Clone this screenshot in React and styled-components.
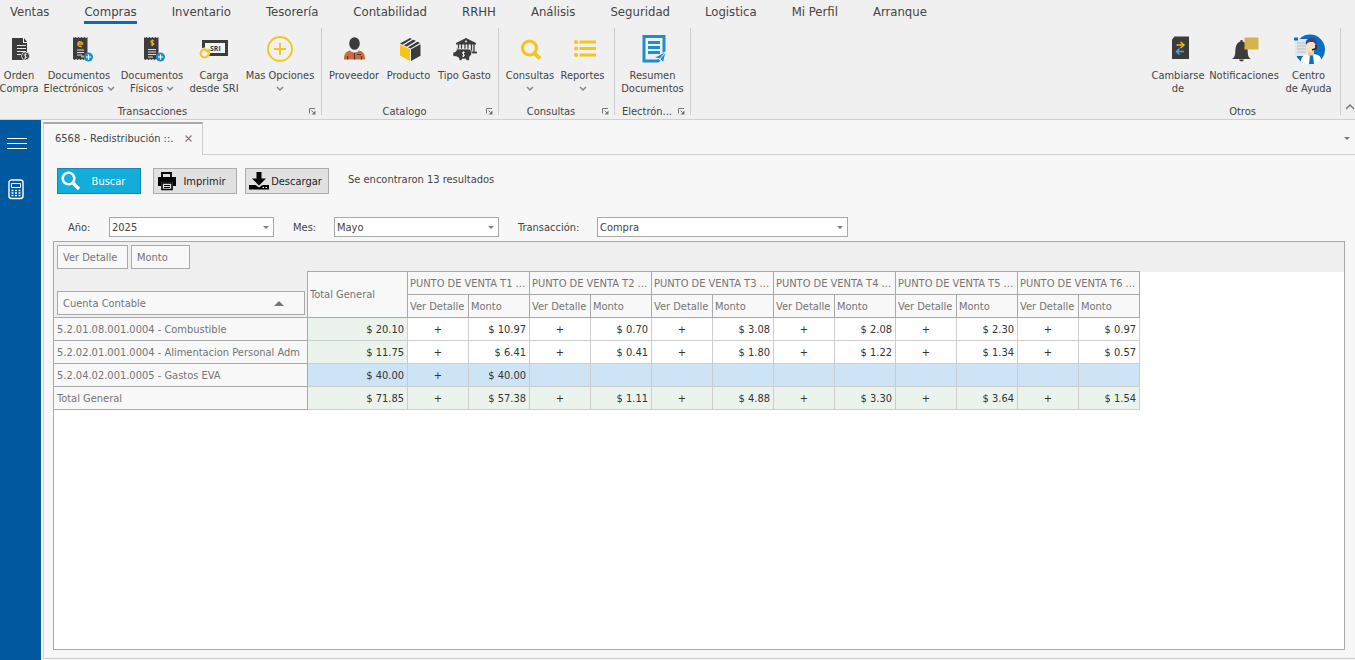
import React from "react";
import styled, { createGlobalStyle } from "styled-components";

const Global = createGlobalStyle`
  *, *::before, *::after { box-sizing: border-box; }
  body { margin: 0; background: #f7f7f7; }
  body, button, select { font-family: "DejaVu Sans Condensed", "Noto Sans", sans-serif; font-size: 11px; line-height: 13px; color: #444; }
  button { border: 0; background: none; padding: 0; cursor: pointer; }
`;

const Page = styled.div`
  min-height: 100vh;
  display: flex;
  flex-direction: column;
`;

const Ribbon = styled.header`
  height: 120px;
  background: #f0f0f0;
  border-bottom: 1px solid #d0d0d0;
`;

const Menu = styled.nav`
  height: 28px;
  padding-left: 10px;
  display: flex;
  gap: 35px;
`;

const MenuItem = styled.a`
  height: 24px;
  padding-top: 3px;
  font-size: 13px;
  line-height: 18px;
  color: #444;
  text-decoration: none;
  border-bottom: 3px solid ${(p) => (p.$active ? "#0a6abf" : "transparent")};
`;

const Groups = styled.div`
  display: flex;
  height: 91px;
`;

const Group = styled.section`
  padding: 0 ${(p) => p.$padRight}px 0 ${(p) => p.$pad}px;
  background: linear-gradient(#cdcdcd, #cdcdcd) right top / 1px 87px no-repeat;
  margin-left: ${(p) => (p.$end ? "auto" : "0")};
`;

const GroupButtons = styled.div`
  display: flex;
  height: 76px;
`;

const RibbonButton = styled.button`
  width: ${(p) => p.$w}px;
  display: flex;
  flex-direction: column;
  align-items: center;
  white-space: nowrap;
`;

const IconBox = styled.span`
  height: 41px;
  padding-top: 5px;
  svg { display: block; }
`;

const Label = styled.span`
  display: block;
  height: 13px;
`;

const GroupFooter = styled.div`
  height: 14px;
  display: flex;
  align-items: center;
  text-align: center;
  gap: 3px;
  span { flex: 1; }
`;

const Launcher = styled.button`
  width: 8px;
  height: 8px;
  svg { display: block; }
`;

const Collapse = styled.button`
  width: 14px;
  padding: 72px 0 0 4px;
  align-self: flex-start;
`;

const Body = styled.div`
  flex: 1;
  display: flex;
`;

const Sidebar = styled.aside`
  width: 41px;
  margin-right: 2px;
  padding: 17px 0 0 7px;
  background: #00589f;
  display: flex;
  flex-direction: column;
  gap: 28px;
  button { width: 20px; }
  svg { display: block; }
`;

const Main = styled.main`
  flex: 1;
  min-width: 0;
  padding: 2px 0 1px;
  display: flex;
  flex-direction: column;
`;

const TabStrip = styled.div`
  display: flex;
  height: 33px;
`;

const Tab = styled.div`
  width: 160px;
  padding: 0 10px 2px 11px;
  display: flex;
  align-items: center;
  justify-content: space-between;
  border: 1px solid #cdcdcd;
  border-top: 2px solid #a9a9a9;
  border-bottom: 0;
`;

const TabRest = styled.div`
  flex: 1;
  display: flex;
  align-items: center;
  justify-content: flex-end;
  padding: 0 5px 4px 0;
  border-bottom: 1px solid #d0d0d0;
`;

const Panel = styled.div`
  flex: 1;
  display: flex;
  flex-direction: column;
  padding: 13px 10px 8px 9px;
  border: solid #cdcdcd;
  border-width: 0 0 1px 1px;
`;

const Toolbar = styled.div`
  display: flex;
  align-items: center;
  padding-left: 4px;
`;

const ToolButton = styled.button`
  width: 84px;
  height: 26px;
  margin-right: ${(p) => p.$gap}px;
  padding: 0 4px 0 3px;
  display: flex;
  align-items: center;
  color: ${(p) => (p.$primary ? "#fff" : "#222")};
  background: ${(p) => (p.$primary ? "#12addb" : "#e1e1e1")};
  border: 1px solid ${(p) => (p.$primary ? "#1883b8" : "#adadad")};
  span { flex: 1; text-align: center; }
`;

const Result = styled.span`
  padding-bottom: 4px;
`;

const Filters = styled.div`
  margin-top: 23px;
  padding-left: 15px;
  display: grid;
  grid-template-columns: 41px 165px 19px 41px 165px 19px 79px 251px;
  align-items: center;
`;

const Gap = styled.span``;

const SelectBox = styled.div`
  position: relative;
  height: 20px;
  &::after {
    content: "";
    position: absolute;
    right: 5px;
    top: 9px;
    border: 3px solid transparent;
    border-top-color: #8c7a80;
    border-bottom: 0;
    pointer-events: none;
  }
`;

const Select = styled.select`
  appearance: none;
  display: block;
  width: 100%;
  height: 20px;
  padding: 0 16px 0 2px;
  border: 1px solid #a9a9a9;
  border-radius: 0;
  background: #fff;
`;

const Pivot = styled.section`
  flex: 1;
  margin-top: 4px;
  border: 1px solid #a9a9a9;
  background: #fff;
`;

const FieldArea = styled.div`
  height: 30px;
  padding: 3px;
  display: flex;
  gap: 3px;
  background: #efefef;
`;

const Field = styled.button`
  width: ${(p) => p.$w};
  height: 24px;
  padding: 0 20px 0 5px;
  display: flex;
  align-items: center;
  justify-content: space-between;
  white-space: nowrap;
  color: #757575;
  background: #f8f8f8;
  border: 1px solid #a9a9a9;
`;

const Table = styled.table`
  width: 1086px;
  margin-top: -1px;
  table-layout: fixed;
  border-collapse: separate;
  border-spacing: 0;
`;

const HeadCell = styled.th`
  height: ${(p) => (p.$top ? 24 : 23)}px;
  padding: 0 2px;
  text-align: left;
  font-weight: normal;
  color: #757575;
  white-space: pre;
  overflow: hidden;
  text-overflow: ellipsis;
  background: #f8f8f8;
  border: solid #a9a9a9;
  border-width: ${(p) => (p.$top ? 1 : 0)}px 1px 1px 0;
`;

const CornerCell = styled.th`
  padding: 19px 2px 2px 3px;
  vertical-align: bottom;
  font-weight: normal;
  background: #efefef;
  border: solid #a9a9a9;
  border-width: 0 1px 1px 0;
`;

const RowHead = styled(HeadCell)`
  padding: 0 3px;
`;

const Cell = styled.td`
  height: 23px;
  padding: 0 ${(p) => (p.$center ? 0 : 3)}px 0 0;
  text-align: ${(p) => (p.$center ? "center" : "right")};
  color: #333;
  background: ${(p) => (p.$selected ? "#cde4f7" : p.$total ? "#ebf4ec" : "#fff")};
  border: solid #cdcdcd;
  border-width: 0 1px 1px 0;
`;

const DARK = "#3c3c3c";
const YEL = "#f5c518";
const BLUE = "#1b8fd2";

const Svg = ({ children, w = 32, h = 32, ...rest }) => (
  <svg width={w} height={h} viewBox={`0 0 ${w} ${h}`} fill="none" aria-hidden="true" {...rest}>
    {children}
  </svg>
);

const Chevron = () => (
  <Svg w={8} h={6}>
    <path d="M1 1l3 3 3-3" stroke="#858585" strokeWidth="1.500" />
  </Svg>
);

const PlusBadge = ({ x, y }) => (
  <g>
    <circle cx={x} cy={y} r="4.500" fill={BLUE} />
    <path d={`M${x - 2.5} ${y}h5M${x} ${y - 2.5}v5`} stroke="#fff" strokeWidth="1.200" />
  </g>
);

const Receipt = ({ x }) => (
  <path
    fill={DARK}
    d={`M${x} 4l1 1 1.500-1 1.500 1 1.500-1 1.500 1 1.500-1 1.500 1 1.500-1 1.500 1 1.500-1V26l-1 1-1.500-1-1.500 1-1.500-1-1.500 1-1.500-1-1.500 1-1.500-1-1.500 1-1.500-1z`}
  />
);

const icons = {
  orden: (
    <Svg>
      <path d="M9 5h11v5h4v17H9z" fill={DARK} />
      <path d="M21 5l3 4h-3z" fill={DARK} />
      <path d="M14 12.500h9M14 15.500h9M14 18.500h9M14 21.500h4" stroke="#e8e8e8" strokeWidth="1.200" />
      <circle cx="22.500" cy="23" r="4" fill={DARK} stroke="#e8e8e8" strokeWidth=".8" />
      <path d="M24 21.500c-2-1-3.500 0-2.500 1.200s2.500.6 2 1.800-2 .8-2.500.3M22.500 20.500v5" stroke="#fff" strokeWidth=".7" />
    </Svg>
  ),
  electronico: (
    <Svg>
      <Receipt x={10} />
      <path d="M15 11h4.500a2.300 2.300 0 1 0-1 2" stroke="#f2a01e" strokeWidth="1.600" />
      <path d="M14 17h7M14 19.500h7M14 22h5" stroke="#ddd" strokeWidth="1.100" />
      <path d="M18 23.500h3" stroke="#f2a01e" strokeWidth="2" />
      <PlusBadge x={25.5} y={24} />
    </Svg>
  ),
  fisico: (
    <Svg>
      <Receipt x={8} />
      <path d="M18 8c-2-1.200-3.800 0-2.800 1.300s3.300.7 2.600 2-2.300.9-3 .3M16.400 6.500v6.500" stroke="#f2b01e" strokeWidth="1.100" />
      <path d="M12 16.500h8M12 19h8M12 21.500h8M12 24h5" stroke="#ddd" strokeWidth="1.100" />
      <PlusBadge x={24.5} y={24} />
    </Svg>
  ),
  sri: (
    <Svg>
      <path d="M4 7h26v16H4z" fill={DARK} />
      <path d="M7 10h20v10H7z" fill="#f4f4f4" />
      <circle cx="6.500" cy="20" r="5.500" fill="#f0f0f0" />
      <path d="M9 17.200a4 4 0 1 0 1.500 4" stroke={YEL} strokeWidth="2" />
      <path d="M6.500 17.500l5.500-2v6z" fill={YEL} />
      <text x="12" y="17.800" fontSize="7" fontWeight="bold" fill={DARK} fontFamily="Open Sans, sans-serif">SRI</text>
    </Svg>
  ),
  mas: (
    <Svg>
      <circle cx="16" cy="16" r="12" stroke={YEL} strokeWidth="1.800" />
      <path d="M10 16h12M16 10v12" stroke={YEL} strokeWidth="1.800" />
    </Svg>
  ),
  proveedor: (
    <Svg>
      <ellipse cx="16.500" cy="10.500" rx="5.300" ry="6.300" fill={DARK} />
      <path d="M6 26.500c0-5 1-7.500 6-9 2 2.500 7 2.500 9 0 5 1.500 6 4 6 9z" fill="#c96d3f" />
      <path d="M16.500 20v6.500M9.500 23v3.500M23.500 23v3.500M19 21.500h4" stroke={DARK} strokeWidth="1.100" />
    </Svg>
  ),
  producto: (
    <Svg>
      <path d="M7 10.500L17 5l10 5-9.500 5.500z" fill={DARK} />
      <path d="M7 11.500l10 4.700V28L7 22.500z" fill={YEL} />
      <path d="M18 16.200l9.500-5v11.500L18 28z" fill={DARK} />
      <path d="M9.500 12.500L20 6M13.500 14.500L24 8.200" stroke="#f0f0f0" strokeWidth="1.400" />
    </Svg>
  ),
  gasto: (
    <Svg>
      <path d="M7 10l10-5 10 5v1.500H7z" fill={DARK} />
      <circle cx="17" cy="8.500" r="1" fill="#f0f0f0" />
      <path d="M9.500 11v6M12.500 11v6M16 11v6M19 11v6M22.500 11v8M25 11v8" stroke={DARK} strokeWidth="1.300" />
      <path d="M22 19.500h6" stroke={DARK} strokeWidth="1.800" />
      <path d="M4 19h2l2-2.500L7 14.500l3 1.500h8c4 0 5 2 4.500 5.500L20.500 24v3.500H17V26h-4v1.500h-3V25l-3-1.500H4z" fill={DARK} stroke="#f0f0f0" strokeWidth=".7" />
      <path d="M15.800 19.500c-2-.8-3 0-2 1.300s2.300.8 1.600 1.800-1.800.6-2.300.2M14.500 18.500v5.500" stroke="#fff" strokeWidth=".9" />
    </Svg>
  ),
  consultas: (
    <Svg>
      <circle cx="15.500" cy="15" r="7" stroke={YEL} strokeWidth="3.200" />
      <path d="M20.500 20.500l5.500 5" stroke={YEL} strokeWidth="3.800" />
    </Svg>
  ),
  reportes: (
    <Svg>
      <path d="M12.500 9H29M12.500 15.500H29M12.500 22H29" stroke={YEL} strokeWidth="3.200" />
      <path d="M9 9h.1M9 15.500h.1M9 22h.1" stroke={YEL} strokeWidth="4" strokeLinecap="round" />
    </Svg>
  ),
  resumen: (
    <Svg>
      <path d="M7 3.500h20v17L21 28H7z" fill="#f0f0f0" stroke={BLUE} strokeWidth="3" />
      <path d="M11 9.500h12M11 14.500h12M11 19.500h12" stroke={BLUE} strokeWidth="2.800" />
      <path d="M17 24.500l12-6-2.500 11-3.500-3.500z" fill={BLUE} stroke="#f0f0f0" strokeWidth="1" />
      <path d="M22 27l6-7" stroke="#f0f0f0" strokeWidth="1" />
    </Svg>
  ),
  cambiarse: (
    <Svg>
      <path d="M12.500 3.500H27V26H10V6.500z" fill={DARK} />
      <path d="M14.500 12h6M18.500 9l3.500 3-3.500 3" stroke="#f5b81e" strokeWidth="1.500" />
      <path d="M22 18.500h-7M17.500 15.500l-3 3 3 3" stroke="#4aa3e0" strokeWidth="1.500" />
    </Svg>
  ),
  notificaciones: (
    <Svg>
      <path d="M4 26c3.500-2 3-5 3.500-10 .5-5 3-7 5-7.500V7h2v1.500C17 9 19 11 19.500 16c.5 5 0 8 3.500 10z" fill={DARK} />
      <path d="M11 26.500h5c-.5 2.500-4.500 2.500-5 0z" fill={DARK} />
      <path d="M16.500 4.500h14v12h-14z" fill="#d2b450" />
    </Svg>
  ),
  ayuda: (
    <Svg>
      <circle cx="17" cy="16.500" r="15" fill="#0a6fc2" />
      <path d="M2 6h14v17H2z" fill="#e3e6e8" />
      <path d="M1 4.500h4v3H1z" fill="#0a6fc2" />
      <path d="M4 10h9M4 13h9M4 16h9M4 19h9" stroke="#b8bdc2" strokeWidth="1" />
      <path d="M8 28.500c0-5 3-7.500 10.500-7.500s9.500 2.500 9.500 6c-5 5.500-14 6.500-20 1.500z" fill="#fff" />
      <path d="M15 17h6v5l-3 2.500-3-2.500z" fill="#eec9a0" />
      <ellipse cx="18" cy="13.500" rx="4.500" ry="5.500" fill="#fbe0bd" />
      <path d="M13 12c-1-5 2-7 5.500-7s6 2.500 5 7c-1-2.500-3-3-5-3S14 9.500 13 12z" fill="#4a3f7d" />
      <path d="M23 12v3.500l-4 1.500" stroke="#222" strokeWidth="1.500" />
      <path d="M17 22.500h3l1 8.500h-5z" fill="#0a6fc2" />
    </Svg>
  ),
};

const groups = [
  {
    title: "Transacciones", pad: 0, padRight: 6,
    items: [
      ["orden", 38, "Orden", "Compra"],
      ["electronico", 82, "Documentos", "Electrónicos", true],
      ["fisico", 64, "Documentos", "Físicos", true],
      ["sri", 60, "Carga", "desde SRI"],
      ["mas", 72, "Mas Opciones", "", true],
    ],
  },
  {
    title: "Catalogo", pad: 5, padRight: 6,
    items: [
      ["proveedor", 54, "Proveedor"],
      ["producto", 55, "Producto"],
      ["gasto", 57, "Tipo Gasto"],
    ],
  },
  {
    title: "Consultas", pad: 5, padRight: 6,
    items: [
      ["consultas", 52, "Consultas", "", true],
      ["reportes", 53, "Reportes", "", true],
    ],
  },
  {
    title: "Electrón...", pad: 5, padRight: 6,
    items: [["resumen", 65, "Resumen", "Documentos"]],
  },
  {
    title: "Otros", pad: 8, padRight: 8, end: true,
    items: [
      ["cambiarse", 52, "Cambiarse", "de"],
      ["notificaciones", 80, "Notificaciones"],
      ["ayuda", 49, "Centro", "de Ayuda"],
    ],
  },
];

const menu = ["Ventas", "Compras", "Inventario", "Tesorería", "Contabilidad", "RRHH", "Análisis", "Seguridad", "Logistica", "Mi Perfil", "Arranque"];

const points = ["T1 ...", "T2  ...", "T3 ...", "T4 ...", "T5 ...", "T6 ..."];

const rows = [
  { name: "5.2.01.08.001.0004 - Combustible", total: "20.10", v: ["10.97", "0.70", "3.08", "2.08", "2.30", "0.97"] },
  { name: "5.2.02.01.001.0004 - Alimentacion Personal Adm", total: "11.75", v: ["6.41", "0.41", "1.80", "1.22", "1.34", "0.57"] },
  { name: "5.2.04.02.001.0005 - Gastos EVA", total: "40.00", v: ["40.00", "", "", "", "", ""], selected: true },
  { name: "Total General", total: "71.85", v: ["57.38", "1.11", "4.88", "3.30", "3.64", "1.54"], grand: true },
];

function RibbonGroup({ group }) {
  return (
    <Group $pad={group.pad} $padRight={group.padRight} $end={group.end}>
      <GroupButtons>
        {group.items.map(([icon, w, first, second, drop]) => (
          <RibbonButton key={icon} $w={w} type="button">
            <IconBox>{icons[icon]}</IconBox>
            <Label>{first}</Label>
            <Label>
              {second}
              {second && drop ? " " : ""}
              {drop && <Chevron />}
            </Label>
          </RibbonButton>
        ))}
      </GroupButtons>
      <GroupFooter>
        <span>{group.title}</span>
        {!group.end && (
          <Launcher type="button" aria-label={`Más de ${group.title}`}>
            <Svg w={8} h={8}>
              <path d="M1.500 6.500v-5H7" stroke="#777" />
              <path d="M7.500 3.500v4h-4z" fill="#777" />
              <path d="M3.500 3.500l3 3" stroke="#777" />
            </Svg>
          </Launcher>
        )}
      </GroupFooter>
    </Group>
  );
}

function Filter({ id, label, value }) {
  return (
    <>
      <label htmlFor={id}>{label}</label>
      <SelectBox>
        <Select id={id} defaultValue={value}>
          <option>{value}</option>
        </Select>
      </SelectBox>
    </>
  );
}

export default function App() {
  return (
    <Page>
      <Global />
      <Ribbon>
        <Menu>
          {menu.map((m) => (
            <MenuItem key={m} href="#" $active={m === "Compras"}>{m}</MenuItem>
          ))}
        </Menu>
        <Groups>
          {groups.map((g) => <RibbonGroup key={g.title} group={g} />)}
          <Collapse type="button" aria-label="Contraer">
            <Svg w={10} h={8}><path d="M1 7l4-4 4 4" stroke="#777" strokeWidth="1.500" /></Svg>
          </Collapse>
        </Groups>
      </Ribbon>
      <Body>
        <Sidebar>
          <button type="button" aria-label="Menú">
            <Svg w={20} h={14}><path d="M0 1.500h20M0 6.500h20M0 11.500h20" stroke="#fff" /></Svg>
          </button>
          <button type="button" aria-label="Calculadora">
            <Svg w={20} h={21}>
              <rect x="2" y="1" width="14" height="18.500" rx="2.500" stroke="#fff" strokeWidth="1.400" />
              <path d="M4.500 4.500h9v4h-9z" stroke="#fff" />
              <path d="M4.500 11.500h9M4.500 14h9M4.500 16.500h9" stroke="#fff" strokeWidth="1.400" strokeDasharray="2 1.500" />
            </Svg>
          </button>
        </Sidebar>
        <Main>
          <TabStrip>
            <Tab>
              <span>6568 - Redistribución ::.</span>
              <button type="button" aria-label="Cerrar">
                <Svg w={7} h={7}><path d="M.5.5l6 6M6.500.5l-6 6" stroke="#8c7a80" strokeWidth="1.200" /></Svg>
              </button>
            </Tab>
            <TabRest>
              <button type="button" aria-label="Lista de pestañas">
                <Svg w={6} h={3}><path d="M0 0h6L3 3z" fill="#777" /></Svg>
              </button>
            </TabRest>
          </TabStrip>
          <Panel>
            <Toolbar>
              <ToolButton type="button" $primary $gap={12}>
                <Svg w={20} h={20}>
                  <circle cx="7.500" cy="7.500" r="5.800" stroke="#fff" strokeWidth="2.600" />
                  <path d="M11.500 11.500l6.500 6.500" stroke="#fff" strokeWidth="3.200" />
                </Svg>
                <span>Buscar</span>
              </ToolButton>
              <ToolButton type="button" $gap={8}>
                <Svg w={20} h={20}>
                  <path d="M5 2h9v5H5z" stroke="#000" strokeWidth="1.800" />
                  <path d="M1 6h18v9h-3v-3.500H4V15H1z" fill="#000" />
                  <path d="M5 12h10v6.500H5z" stroke="#000" strokeWidth="1.600" />
                  <path d="M7 14.500h6M7 16.500h6" stroke="#000" />
                </Svg>
                <span>Imprimir</span>
              </ToolButton>
              <ToolButton type="button" $gap={19}>
                <Svg w={20} h={20}>
                  <path d="M7.500 1h5v6.500H17l-7 7-7-7h4.500zM0 14h6.500l3.500 2.500 3.500-2.500H20v4.500H0z" fill="#000" />
                  <path d="M13.500 16.500h1.500M16.500 16.500H18" stroke="#fff" />
                </Svg>
                <span>Descargar</span>
              </ToolButton>
              <Result>Se encontraron 13 resultados</Result>
            </Toolbar>
            <Filters>
              <Filter id="anio" label="Año:" value="2025" />
              <Gap />
              <Filter id="mes" label="Mes:" value="Mayo" />
              <Gap />
              <Filter id="transaccion" label="Transacción:" value="Compra" />
            </Filters>
            <Pivot>
              <FieldArea>
                <Field type="button" $w="71px">Ver Detalle</Field>
                <Field type="button" $w="59px">Monto</Field>
              </FieldArea>
              <Table>
                <colgroup>
                  <col style={{ width: 254 }} />
                  <col style={{ width: 100 }} />
                  <col span={12} />
                </colgroup>
                <thead>
                  <tr>
                    <CornerCell rowSpan={2} scope="col">
                      <Field type="button" $w="100%">
                        Cuenta Contable
                        <Svg w={10} h={5}><path d="M0 5h10L5 0z" fill="#757575" /></Svg>
                      </Field>
                    </CornerCell>
                    <HeadCell rowSpan={2} scope="col" $top>Total General</HeadCell>
                    {points.map((p) => (
                      <HeadCell key={p} colSpan={2} scope="colgroup" $top>{`PUNTO DE VENTA ${p}`}</HeadCell>
                    ))}
                  </tr>
                  <tr>
                    {points.map((p) => (
                      <React.Fragment key={p}>
                        <HeadCell scope="col">Ver Detalle</HeadCell>
                        <HeadCell scope="col">Monto</HeadCell>
                      </React.Fragment>
                    ))}
                  </tr>
                </thead>
                <tbody>
                  {rows.map((r) => (
                    <tr key={r.name}>
                      <RowHead scope="row">{r.name}</RowHead>
                      <Cell $total $selected={r.selected}>$ {r.total}</Cell>
                      {r.v.map((v, i) => (
                        <React.Fragment key={i}>
                          <Cell $center $total={r.grand} $selected={r.selected}>{v && "+"}</Cell>
                          <Cell $total={r.grand} $selected={r.selected}>{v && `$ ${v}`}</Cell>
                        </React.Fragment>
                      ))}
                    </tr>
                  ))}
                </tbody>
              </Table>
            </Pivot>
          </Panel>
        </Main>
      </Body>
    </Page>
  );
}
